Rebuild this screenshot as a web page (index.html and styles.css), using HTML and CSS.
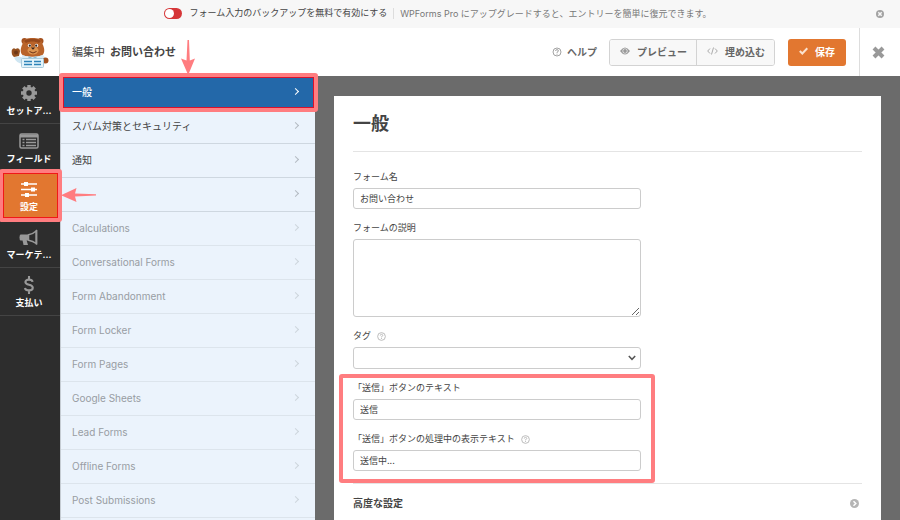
FILE: index.html
```html
<!DOCTYPE html>
<html lang="ja">
<head>
  <meta charset="UTF-8">
  <meta name="viewport" content="width=device-width, initial-scale=1">
  <title>WPForms - お問い合わせ</title>
  <link rel="stylesheet" href="styles.css">
</head>
<body>

  <div class="notice">
    <label class="notice-toggle">
      <input type="checkbox" class="switch">
      <span>フォーム入力のバックアップを無料で有効にする</span>
    </label>
    <span class="notice-text">WPForms Pro にアップグレードすると、エントリーを簡単に復元できます。</span>
    <button type="button" class="notice-close" aria-label="閉じる">
      <svg width="8" height="8" viewBox="0 0 8 8"><circle cx="4" cy="4" r="4" fill="#a3a3a3"/><path d="M2.300 2.300l3.400 3.400M5.700 2.300L2.300 5.700" stroke="#f7f7f7" stroke-width="1.500"/></svg>
    </button>
  </div>

  <header class="toolbar">
    <div class="logo">
      <svg width="38" height="31" viewBox="0 0 38 31">
        <circle cx="13.500" cy="4" r="3" fill="#a4511f"/>
        <circle cx="29.500" cy="4" r="3" fill="#a4511f"/>
        <path d="M11.500 7C12 2 16 1 21.500 1S31 2 31.500 7c2 4 2.500 8 .5 10.500-2 3-19 3-21 0-2-2.500-1.500-6.500.5-10.500z" fill="#b9642b"/>
        <path d="M13 4c3-3 14-3 17 0l-2 2c-4-2-9-2-13 0z" fill="#96491d"/>
        <ellipse cx="22" cy="13.500" rx="5.500" ry="4" fill="#dd9450"/>
        <circle cx="18.500" cy="8.500" r="1.700" fill="#fff"/>
        <circle cx="25.500" cy="8.500" r="1.700" fill="#fff"/>
        <circle cx="18.800" cy="8.700" r="1.100" fill="#2c201b"/>
        <circle cx="25.200" cy="8.700" r="1.100" fill="#2c201b"/>
        <path d="M19.800 10.500h4.400L22 12.800z" fill="#3a221a"/>
        <path d="M18.500 14.500q3.500 3 7 0" fill="none" stroke="#6b3218"/>
        <path d="M.8 13q1.700-3 3.700-1 4-2 4.500 2l-1 5-5 1q-3-2-2.200-7z" fill="#95501f"/>
        <circle cx="5" cy="15.500" r="2" fill="#6e3817"/>
        <path d="M3 20.500l5-1 4 1v6.500q-7-1-9-6.500z" fill="#cfe6f2"/>
        <path d="M11 18q10 4 21 0l3 4-2 6H11z" fill="#d9edf7"/>
        <path d="M17.500 19l4 2 4-2v3l-4-1-4 1z" fill="#8bb7cf"/>
        <circle cx="34.500" cy="23.500" r="3" fill="#a4511f"/>
        <rect x="10.500" y="21.500" width="22" height="9" rx="1" fill="#e4f4fb" stroke="#a8cadb"/>
        <path d="M13 24.500h8M13 27.500h8M23 24.500h7M23 27.500h7" stroke="#2d83b8" stroke-width="1.300"/>
      </svg>
    </div>
    <h1 class="form-title">編集中 <strong>お問い合わせ</strong>
      <svg class="arrow-down" width="14" height="35" viewBox="0 0 14 35"><path d="M6.500 0h1.500l.8 20.500L14 18.500 7.200 35 0 18.500l5.500 2z" fill="#ff7d80"/></svg>
    </h1>
    <a href="#" class="help">
      <svg width="10" height="10" viewBox="0 0 10 10" fill="none" stroke="#a3a3a3"><circle cx="5" cy="5" r="4"/><path d="M3.600 4q0-1.400 1.400-1.400T6.400 4Q6.400 4.700 5 5.200v.7M5 6.700v1"/></svg>
      ヘルプ
    </a>
    <div class="button-group">
      <button type="button" class="btn">
        <svg width="10" height="8" viewBox="0 0 10 8"><path d="M0 4Q5-3 10 4 5 11 0 4z" fill="#999"/><circle cx="5" cy="4" r="2.500" fill="#f8f8f8"/><circle cx="5" cy="4" r="1.900" fill="#999"/></svg>
        プレビュー
      </button>
      <button type="button" class="btn">
        <svg width="11" height="8" viewBox="0 0 11 8" fill="none" stroke="#aaa"><path d="M3 1.500L.7 4 3 6.500M8 1.500L10.300 4 8 6.500M6.500.5l-2 7"/></svg>
        埋め込む
      </button>
    </div>
    <button type="button" class="btn-save">
      <svg width="9" height="8" viewBox="0 0 9 8" fill="none" stroke="#fbe3d0" stroke-width="2"><path d="M.8 4l2.500 2.500L8.300 1.300"/></svg>
      保存
    </button>
    <button type="button" class="toolbar-close" aria-label="終了">
      <svg width="13" height="13" viewBox="0 0 13 13"><path d="M2 2l9 9M11 2l-9 9" stroke="#999" stroke-width="4"/></svg>
    </button>
  </header>

  <div class="builder">
    <nav class="sidebar">
      <a href="#" class="side-item">
        <svg width="18" height="18" viewBox="0 0 18 18"><path d="M9 1v16M1 9h16M3.300 3.300l11.400 11.400M14.700 3.300L3.300 14.700" stroke="#999" stroke-width="3.400"/><circle cx="9" cy="9" r="4.500" fill="none" stroke="#999" stroke-width="3.600"/><circle cx="9" cy="9" r="2.700" fill="#2d2d2d"/></svg>
        <span>セットア...</span>
      </a>
      <a href="#" class="side-item">
        <svg width="20" height="18" viewBox="0 0 20 18"><rect x="1" y="2" width="18" height="14" rx="1.500" fill="none" stroke="#999" stroke-width="1.500"/><path d="M1 4h18" stroke="#999" stroke-width="3"/><path d="M3.500 7.500h2M3.500 10.500h2M3.500 13.500h2M7 7.500h10M7 10.500h10M7 13.500h10" stroke="#999" stroke-width="1.500"/></svg>
        <span>フィールド</span>
      </a>
      <a href="#" class="side-item current">
        <svg width="18" height="18" viewBox="0 0 18 18"><path d="M1 4h16M1 9.500h16M1 15h16" stroke="#fff" stroke-width="1.500"/><path d="M4 2h4v4H4zM11 7.500h4v4h-4zM5 13h4v4H5z" fill="#fff"/></svg>
        <span>設定</span>
        <svg class="arrow-left" width="35" height="14" viewBox="0 0 35 14"><path d="M35 6.300v1.300l-21 .8 1.500 5.600L0 7.200 15.500 0 14 5.600z" fill="#ff7d80"/></svg>
      </a>
      <a href="#" class="side-item">
        <svg width="20" height="18" viewBox="0 0 20 18"><path d="M1.500 6.500h8v6h-8Q.5 12 .5 9.500t1-3z" fill="#999"/><path d="M3.500 12h4l1.500 5H4.500z" fill="#999"/><path d="M9.500 6.800Q14 6 17.200 3v12.500Q14 13 9.500 12.200z" fill="none" stroke="#999" stroke-width="1.500"/><path d="M17.500 2v14.500" stroke="#999" stroke-width="1.800"/></svg>
        <span>マーケテ...</span>
      </a>
      <a href="#" class="side-item">
        <svg width="12" height="18" viewBox="0 0 12 20" fill="none" stroke="#999" stroke-width="2.300"><path d="M10 6.500Q9.500 4 6 4 2 4 2 6.800 2 9 6 9.800t4.200 3.200Q10.200 16 6 16 2 16 1.500 13.300M6 0v4M6 16v4"/></svg>
        <span>支払い</span>
      </a>
    </nav>

    <nav class="panel">
      <a href="#" class="panel-item active">一般</a>
      <a href="#" class="panel-item">スパム対策とセキュリティ</a>
      <a href="#" class="panel-item">通知</a>
      <a href="#" class="panel-item" aria-label="確認"></a>
      <a href="#" class="panel-item locked">Calculations</a>
      <a href="#" class="panel-item locked">Conversational Forms</a>
      <a href="#" class="panel-item locked">Form Abandonment</a>
      <a href="#" class="panel-item locked">Form Locker</a>
      <a href="#" class="panel-item locked">Form Pages</a>
      <a href="#" class="panel-item locked">Google Sheets</a>
      <a href="#" class="panel-item locked">Lead Forms</a>
      <a href="#" class="panel-item locked">Offline Forms</a>
      <a href="#" class="panel-item locked">Post Submissions</a>
    </nav>

    <main class="content">
      <form class="card">
        <h2>一般</h2>

        <div class="field">
          <label for="form-name">フォーム名</label>
          <input type="text" id="form-name" value="お問い合わせ">
        </div>

        <div class="field">
          <label for="form-desc">フォームの説明</label>
          <textarea id="form-desc"></textarea>
        </div>

        <div class="field">
          <label for="form-tags">タグ
            <svg class="hint" width="9" height="9" viewBox="0 0 10 10"><circle cx="5" cy="5" r="4.300"/><path d="M3.600 4q0-1.400 1.400-1.400T6.400 4Q6.400 4.700 5 5.200v.7M5 6.700v1"/></svg>
          </label>
          <div class="select-wrap">
            <select id="form-tags"><option></option></select>
            <svg width="8" height="6" viewBox="0 0 8 6" fill="none" stroke="#555" stroke-width="1.500"><path d="M.8 1L4 4.300 7.200 1"/></svg>
          </div>
        </div>

        <div class="marked">
          <div class="field">
            <label for="submit-text">「送信」ボタンのテキスト</label>
            <input type="text" id="submit-text" value="送信">
          </div>

          <div class="field">
            <label for="submit-processing">「送信」ボタンの処理中の表示テキスト
              <svg class="hint" width="9" height="9" viewBox="0 0 10 10"><circle cx="5" cy="5" r="4.300"/><path d="M3.600 4q0-1.400 1.400-1.400T6.400 4Q6.400 4.700 5 5.200v.7M5 6.700v1"/></svg>
            </label>
            <input type="text" id="submit-processing" value="送信中...">
          </div>
        </div>

        <button type="button" class="advanced">
          高度な設定
          <svg width="9" height="9" viewBox="0 0 9 9"><circle cx="4.500" cy="4.500" r="4.500" fill="#b5b5b5"/><path d="M3.500 2.200l2.300 2.300-2.300 2.300" fill="none" stroke="#fff" stroke-width="1.500"/></svg>
        </button>
      </form>
    </main>
  </div>

</body>
</html>
```
FILE: styles.css
```css
* {
  box-sizing: border-box;
}

body {
  margin: 0;
  height: 100vh;
  display: flex;
  flex-direction: column;
  overflow: hidden;
  font-family: Inter, "Noto Sans CJK JP", sans-serif;
  font-size: 10px;
  color: #444;
  background-color: #6b6b6b;
}

button, input, textarea, select {
  font-family: inherit;
  color: inherit;
}

button {
  cursor: pointer;
}

a {
  color: inherit;
  text-decoration: none;
}

svg {
  flex: none;
}

/* Top notice */
.notice {
  position: relative;
  flex: none;
  display: flex;
  align-items: center;
  justify-content: center;
  height: 28px;
  padding: 0 56px 2px 32px;
  background-color: #f7f7f7;
  font-size: 9px;
  line-height: 16px;
  white-space: nowrap;
}

.notice-toggle {
  display: flex;
  align-items: center;
  gap: 7px;
  padding-right: 6px;
}

.switch {
  appearance: none;
  display: flex;
  width: 18px;
  height: 11px;
  margin: 0;
  padding: 1px;
  border-radius: 6px;
  background-color: #d63638;
}

.switch::before {
  content: "";
  width: 9px;
  height: 9px;
  border-radius: 50%;
  background-color: #fff;
}

.notice-text {
  padding-left: 6px;
  border-left: 1px solid #ddd;
  line-height: 11px;
  color: #777;
}

.notice-close {
  position: absolute;
  top: 0;
  right: 16px;
  display: flex;
  align-items: center;
  height: 28px;
  padding: 0;
  border: none;
  background: none;
}

/* Toolbar */
.toolbar {
  flex: none;
  display: flex;
  align-items: center;
  height: 48px;
  background-color: #fff;
}

.logo {
  display: flex;
  align-items: center;
  justify-content: center;
  width: 60px;
  height: 48px;
  border-right: 1px solid #e2e2e2;
}

.form-title {
  position: relative;
  margin: 0 auto 0 0;
  padding: 0 19px 0 12px;
  font-size: 11px;
  font-weight: normal;
  line-height: 48px;
}

.form-title strong {
  margin-left: 2px;
}

.arrow-down {
  position: absolute;
  right: 0;
  top: 12px;
  z-index: 3;
}

.help {
  display: flex;
  align-items: center;
  gap: 5px;
  margin-right: 12px;
  padding-bottom: 1px;
  color: #666;
  font-weight: bold;
}

.button-group {
  display: flex;
  margin-right: 13px;
  border: 1px solid #d3d3d3;
  border-radius: 3px;
  overflow: hidden;
}

.btn {
  display: flex;
  align-items: center;
  gap: 7px;
  height: 25px;
  padding: 0 9px 2px 10px;
  border: none;
  background-color: #f8f8f8;
  color: #666;
  font-size: 10px;
  font-weight: bold;
}

.btn + .btn {
  border-left: 1px solid #d3d3d3;
}

.btn-save {
  display: flex;
  align-items: center;
  gap: 7px;
  height: 27px;
  margin-right: 13px;
  padding: 0 11px 2px;
  border: none;
  border-radius: 3px;
  background-color: #e27730;
  color: #fff;
  font-size: 10px;
  font-weight: bold;
}

.toolbar-close {
  display: flex;
  align-items: center;
  justify-content: center;
  width: 41px;
  height: 48px;
  padding: 0 4px 0 0;
  border: none;
  border-left: 1px solid #ddd;
  background: none;
}

/* Builder */
.builder {
  flex: 1;
  min-height: 0;
  display: flex;
}

.sidebar {
  flex: none;
  width: 60px;
  background-color: #2d2d2d;
}

.side-item {
  position: relative;
  display: flex;
  flex-direction: column;
  align-items: center;
  justify-content: center;
  gap: 1px;
  height: 48px;
  padding: 3px 2px 0 0;
  border-bottom: 1px solid #444;
  color: #fff;
  font-size: 9px;
  font-weight: bold;
  line-height: 16px;
  white-space: nowrap;
}

.side-item.current {
  background-color: #e27730;
}

/* Red frames that point out parts of the screen */
.side-item.current::after,
.panel-item.active::after,
.marked::after {
  content: "";
  position: absolute;
  z-index: 2;
  border: 4px solid #ff7d80;
  border-radius: 3px;
  pointer-events: none;
}

.side-item.current::after {
  inset: -3px -2px -3px -1px;
  box-shadow: inset 0 0 0 1px #f01818;
}

.arrow-left {
  position: absolute;
  left: 61px;
  top: 16px;
  z-index: 3;
}

.panel {
  flex: none;
  width: 255px;
  border-left: 1px solid #c5ccd3;
  background-color: #ebf3fc;
}

.panel-item {
  position: relative;
  display: flex;
  align-items: center;
  justify-content: space-between;
  height: 34px;
  padding: 0 17px 2px 11px;
  border-bottom: 1px solid #ced7e0;
}

.panel-item::before {
  content: "";
  order: 1;
  width: 4px;
  height: 4px;
  margin-left: auto;
  border-top: 1px solid #b3bac2;
  border-right: 1px solid #b3bac2;
  transform: rotate(45deg);
}

.panel-item.active {
  background-color: #2368a9;
  color: #fff;
  font-weight: 500;
}

.panel-item.active::before {
  border-color: #fff;
}

.panel-item.active::after {
  inset: -3px -3px -3px -2px;
  box-shadow: inset 0 0 0 1px #d9122c;
}

.panel-item.locked {
  color: #989da3;
  border-color: #dce4ec;
}

.panel-item.locked::before {
  border-color: #cdd5dc;
}

/* Form settings */
.content {
  flex: 1;
  min-width: 0;
  padding: 20px 19px 0;
  background-color: #6b6b6b;
}

.card {
  height: 100%;
  padding: 19px 19px 0;
  background-color: #fff;
}

h2 {
  margin: 0 0 17px;
  padding-bottom: 18px;
  border-bottom: 1px solid #e4e4e4;
  font-size: 18px;
  line-height: 18px;
}

.field {
  max-width: 288px;
  margin-bottom: 11px;
}

.field label {
  display: flex;
  align-items: center;
  gap: 6px;
  margin-bottom: 3px;
  font-size: 9px;
  line-height: 16px;
}

.field input,
.field textarea,
.field select {
  display: block;
  width: 100%;
  height: 21px;
  padding: 0 6px;
  border: 1px solid #ccc;
  border-radius: 3px;
  background-color: #fff;
  font-size: 9px;
}

.field textarea {
  height: 78px;
}

.field select {
  appearance: none;
  height: 22px;
}

.select-wrap {
  position: relative;
}

.select-wrap svg {
  position: absolute;
  right: 5px;
  top: 8px;
  pointer-events: none;
}

.hint {
  fill: none;
  stroke: #b5b5b5;
}

.marked {
  position: relative;
  max-width: 288px;
}

.marked::after {
  inset: -6px -14px -12px;
}

.marked .field:last-child {
  margin-bottom: 12px;
}

.advanced {
  display: flex;
  align-items: center;
  justify-content: space-between;
  width: 100%;
  padding: 11px 3px 9px 0;
  border: none;
  border-top: 1px solid #e4e4e4;
  background: none;
  font-size: 10px;
  font-weight: bold;
  line-height: 16px;
}
```
